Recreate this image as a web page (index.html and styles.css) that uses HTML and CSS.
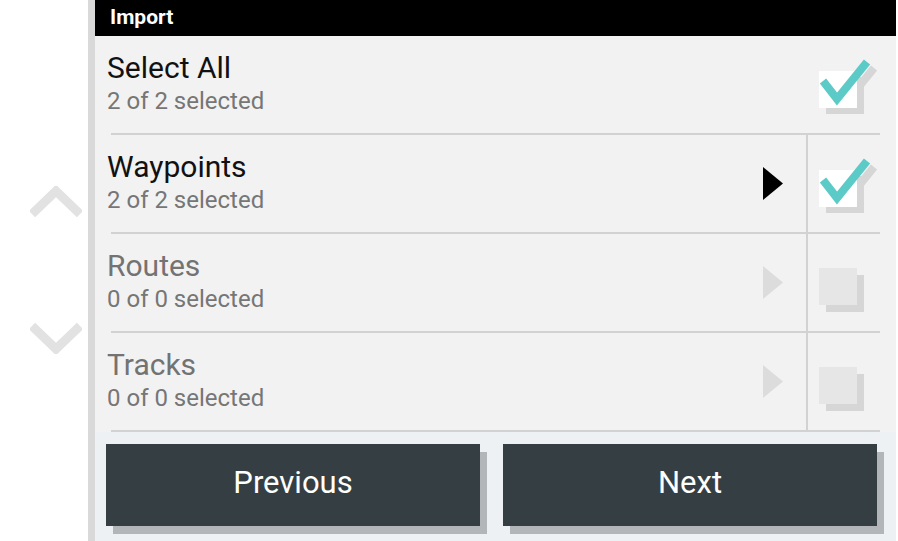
FILE: index.html
```html
<!DOCTYPE html>
<html lang="en">
<head>
    <meta charset="UTF-8">
    <meta name="viewport" content="width=device-width, initial-scale=1.0">
    <title>Import</title>
    <link rel="stylesheet" href="styles.css">
</head>
<body>

    <div class="scroller">
        <svg class="chevron chevron-up" width="52" height="32" viewBox="0 0 52 32">
            <path d="M2 28 L26 5 L50 28" fill="none" stroke="#e2e2e2" stroke-width="9"/>
        </svg>
        <svg class="chevron chevron-down" width="52" height="32" viewBox="0 0 52 32">
            <path d="M2 4 L26 27 L50 4" fill="none" stroke="#e2e2e2" stroke-width="9"/>
        </svg>
    </div>
    <div class="strip"></div>

    <div class="panel">
        <div class="header">Import</div>

        <div class="list">
            <div class="item">
                <div class="item-text">
                    <div class="item-title">Select All</div>
                    <div class="item-sub">2 of 2 selected</div>
                </div>
                <div class="item-arrow"></div>
                <div class="item-divider hidden"></div>
                <div class="item-check">
                    <svg width="72" height="97" viewBox="0 0 72 97">
                        <rect x="18" y="41" width="38" height="37" fill="#d6d6d6"/>
                        <path d="M22 51 L36 69 L66 32" fill="none" stroke="#d6d6d6" stroke-width="8"/>
                        <rect x="11" y="35" width="38" height="37" fill="#ffffff"/>
                        <path d="M15 45 L29 63 L59 26" fill="none" stroke="#5ccbc7" stroke-width="8"/>
                    </svg>
                </div>
            </div>
            <div class="sep"></div>

            <div class="item">
                <div class="item-text">
                    <div class="item-title">Waypoints</div>
                    <div class="item-sub">2 of 2 selected</div>
                </div>
                <div class="item-arrow">
                    <svg width="20" height="33" viewBox="0 0 20 33"><path d="M0 0 L20 16.5 L0 33 Z" fill="#000"/></svg>
                </div>
                <div class="item-divider"></div>
                <div class="item-check">
                    <svg width="72" height="97" viewBox="0 0 72 97">
                        <rect x="18" y="41" width="38" height="37" fill="#d6d6d6"/>
                        <path d="M22 51 L36 69 L66 32" fill="none" stroke="#d6d6d6" stroke-width="8"/>
                        <rect x="11" y="35" width="38" height="37" fill="#ffffff"/>
                        <path d="M15 45 L29 63 L59 26" fill="none" stroke="#5ccbc7" stroke-width="8"/>
                    </svg>
                </div>
            </div>
            <div class="sep"></div>

            <div class="item disabled">
                <div class="item-text">
                    <div class="item-title">Routes</div>
                    <div class="item-sub">0 of 0 selected</div>
                </div>
                <div class="item-arrow">
                    <svg width="20" height="33" viewBox="0 0 20 33"><path d="M0 0 L20 16.5 L0 33 Z" fill="#dcdcdc"/></svg>
                </div>
                <div class="item-divider"></div>
                <div class="item-check">
                    <svg width="72" height="97" viewBox="0 0 72 97">
                        <rect x="18" y="41" width="38" height="37" fill="#d6d6d6"/>
                        <rect x="11" y="34" width="38" height="37" fill="#e6e6e6"/>
                    </svg>
                </div>
            </div>
            <div class="sep"></div>

            <div class="item disabled">
                <div class="item-text">
                    <div class="item-title">Tracks</div>
                    <div class="item-sub">0 of 0 selected</div>
                </div>
                <div class="item-arrow">
                    <svg width="20" height="33" viewBox="0 0 20 33"><path d="M0 0 L20 16.5 L0 33 Z" fill="#dcdcdc"/></svg>
                </div>
                <div class="item-divider"></div>
                <div class="item-check">
                    <svg width="72" height="97" viewBox="0 0 72 97">
                        <rect x="18" y="41" width="38" height="37" fill="#d6d6d6"/>
                        <rect x="11" y="34" width="38" height="37" fill="#e6e6e6"/>
                    </svg>
                </div>
            </div>
            <div class="sep"></div>
        </div>

        <div class="footer">
            <button class="btn">Previous</button>
            <button class="btn">Next</button>
        </div>
    </div>

</body>
</html>
```

FILE: styles.css
```css
body {
    font-family: Roboto, "Noto Sans", sans-serif;
    background-color: #ffffff;
    margin: 0;
    padding: 0;
    width: 898px;
    height: 541px;
    display: flex;
    overflow: hidden;
}

.scroller {
    width: 88px;
    display: flex;
    flex-direction: column;
    align-items: flex-start;
    padding: 186px 0 0 30px;
    box-sizing: border-box;
}

.chevron-down {
    margin-top: 104px;
}

.strip {
    width: 7px;
    background-color: #d9d9d9;
}

.panel {
    width: 801px;
    display: flex;
    flex-direction: column;
    background-color: #edf1f3;
}

.header {
    height: 36px;
    background-color: #000000;
    color: #ffffff;
    font-size: 21px;
    font-weight: bold;
    line-height: 34px;
    padding-left: 15px;
}

.list {
    background-color: #f2f2f2;
}

.item {
    height: 97px;
    display: flex;
}

.item-text {
    flex: 1;
    padding: 15px 0 0 12px;
}

.item-title {
    font-size: 30px;
    line-height: 34px;
    color: #111111;
}

.item-sub {
    font-size: 24px;
    line-height: 32px;
    color: #767676;
}

.disabled .item-title {
    color: #737373;
}

.item-arrow {
    width: 66px;
    display: flex;
    align-items: center;
    justify-content: flex-end;
    padding-right: 23px;
    box-sizing: border-box;
}

.item-divider {
    width: 2px;
    background-color: #d2d2d2;
}

.item-divider.hidden {
    background-color: transparent;
}

.item-check {
    width: 72px;
    margin-right: 16px;
}

.item-check svg {
    display: block;
}

.sep {
    height: 2px;
    margin: 0 16px;
    background-color: #d2d2d2;
}

.footer {
    display: flex;
    gap: 23px;
    padding: 12px 0 0 11px;
}

.btn {
    width: 374px;
    height: 82px;
    font-family: Roboto, "Noto Sans", sans-serif;
    font-size: 31px;
    line-height: 36px;
    color: #ffffff;
    background-color: #353f43;
    border: none;
    border-radius: 0;
    box-shadow: 7px 8px 0 #b2b6b8;
    padding: 0 0 4px 0;
    cursor: pointer;
}
```
